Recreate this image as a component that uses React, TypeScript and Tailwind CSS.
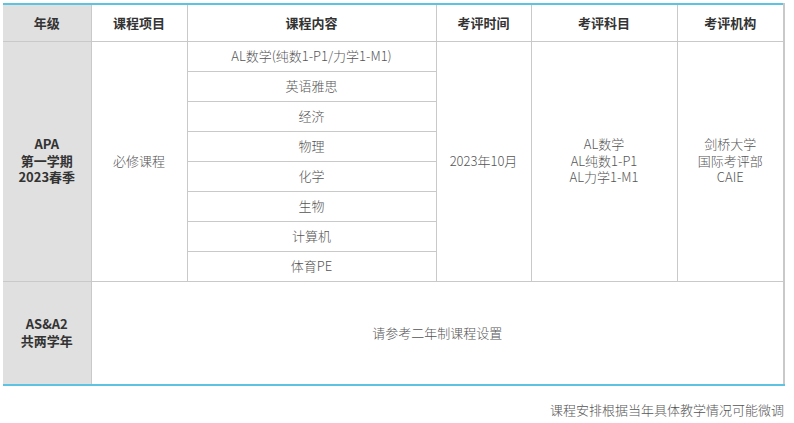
import React from "react";

const courses = [
  "AL数学(纯数1-P1/力学1-M1)",
  "英语雅思",
  "经济",
  "物理",
  "化学",
  "生物",
  "计算机",
  "体育PE",
];

const font = { fontFamily: '"Noto Sans CJK SC", "Noto Sans", sans-serif' };

function Lines({ items, bold }: { items: string[]; bold?: boolean }) {
  return (
    <div className="flex flex-col items-center">
      {items.map((t) => (
        <span key={t} className={`block h-[16.5px] leading-[16.5px] ${bold ? "font-bold text-[#333]" : ""}`}>
          {t}
        </span>
      ))}
    </div>
  );
}

export default function App() {
  const b = "border border-[#c9c9c9]";
  const h = `${b} border-t-2 border-t-[#5cc3e3] font-bold text-[#333]`;
  return (
    <div className="w-[794px] h-[423px] bg-white pt-[3px] pl-[3px]" style={font}>
      <table className="w-[781px] border-collapse table-fixed text-[13px] font-light text-[#555]">
        <colgroup>
          <col className="w-[88px]" />
          <col className="w-[96px]" />
          <col className="w-[249px]" />
          <col className="w-[95px]" />
          <col className="w-[146px]" />
          <col className="w-[107px]" />
        </colgroup>
        <thead>
          <tr className="h-[37px]">
            <th className={`${h} border-l-0 bg-[#e0e0e0]`}>年级</th>
            <th className={h}>课程项目</th>
            <th className={h}>课程内容</th>
            <th className={h}>考评时间</th>
            <th className={h}>考评科目</th>
            <th className={`${h} border-r-2`}>考评机构</th>
          </tr>
        </thead>
        <tbody>
          {courses.map((c, i) => (
            <tr key={c} className="h-[30px]">
              {i === 0 && (
                <>
                  <td rowSpan={8} className={`${b} border-l-0 bg-[#e0e0e0] text-center`}>
                    <Lines items={["APA", "第一学期", "2023春季"]} bold />
                  </td>
                  <td rowSpan={8} className={`${b} text-center`}>必修课程</td>
                </>
              )}
              <td className={`${b} text-center`}>{c}</td>
              {i === 0 && (
                <>
                  <td rowSpan={8} className={`${b} text-center`}>2023年10月</td>
                  <td rowSpan={8} className={`${b} text-center`}>
                    <Lines items={["AL数学", "AL纯数1-P1", "AL力学1-M1"]} />
                  </td>
                  <td rowSpan={8} className={`${b} border-r-2 text-center`}>
                    <Lines items={["剑桥大学", "国际考评部", "CAIE"]} />
                  </td>
                </>
              )}
            </tr>
          ))}
          <tr className="h-[104px]">
            <td className={`${b} border-l-0 border-b-2 border-b-[#5cc3e3] bg-[#e0e0e0] text-center`}>
              <Lines items={["AS&A2", "共两学年"]} bold />
            </td>
            <td colSpan={5} className={`${b} border-r-2 border-b-2 border-b-[#5cc3e3] text-center`}>
              请参考二年制课程设置
            </td>
          </tr>
        </tbody>
      </table>
      <div className="w-[781px] flex justify-end mt-[14px] text-[13px] font-light text-[#555]">
        课程安排根据当年具体教学情况可能微调
      </div>
    </div>
  );
}
